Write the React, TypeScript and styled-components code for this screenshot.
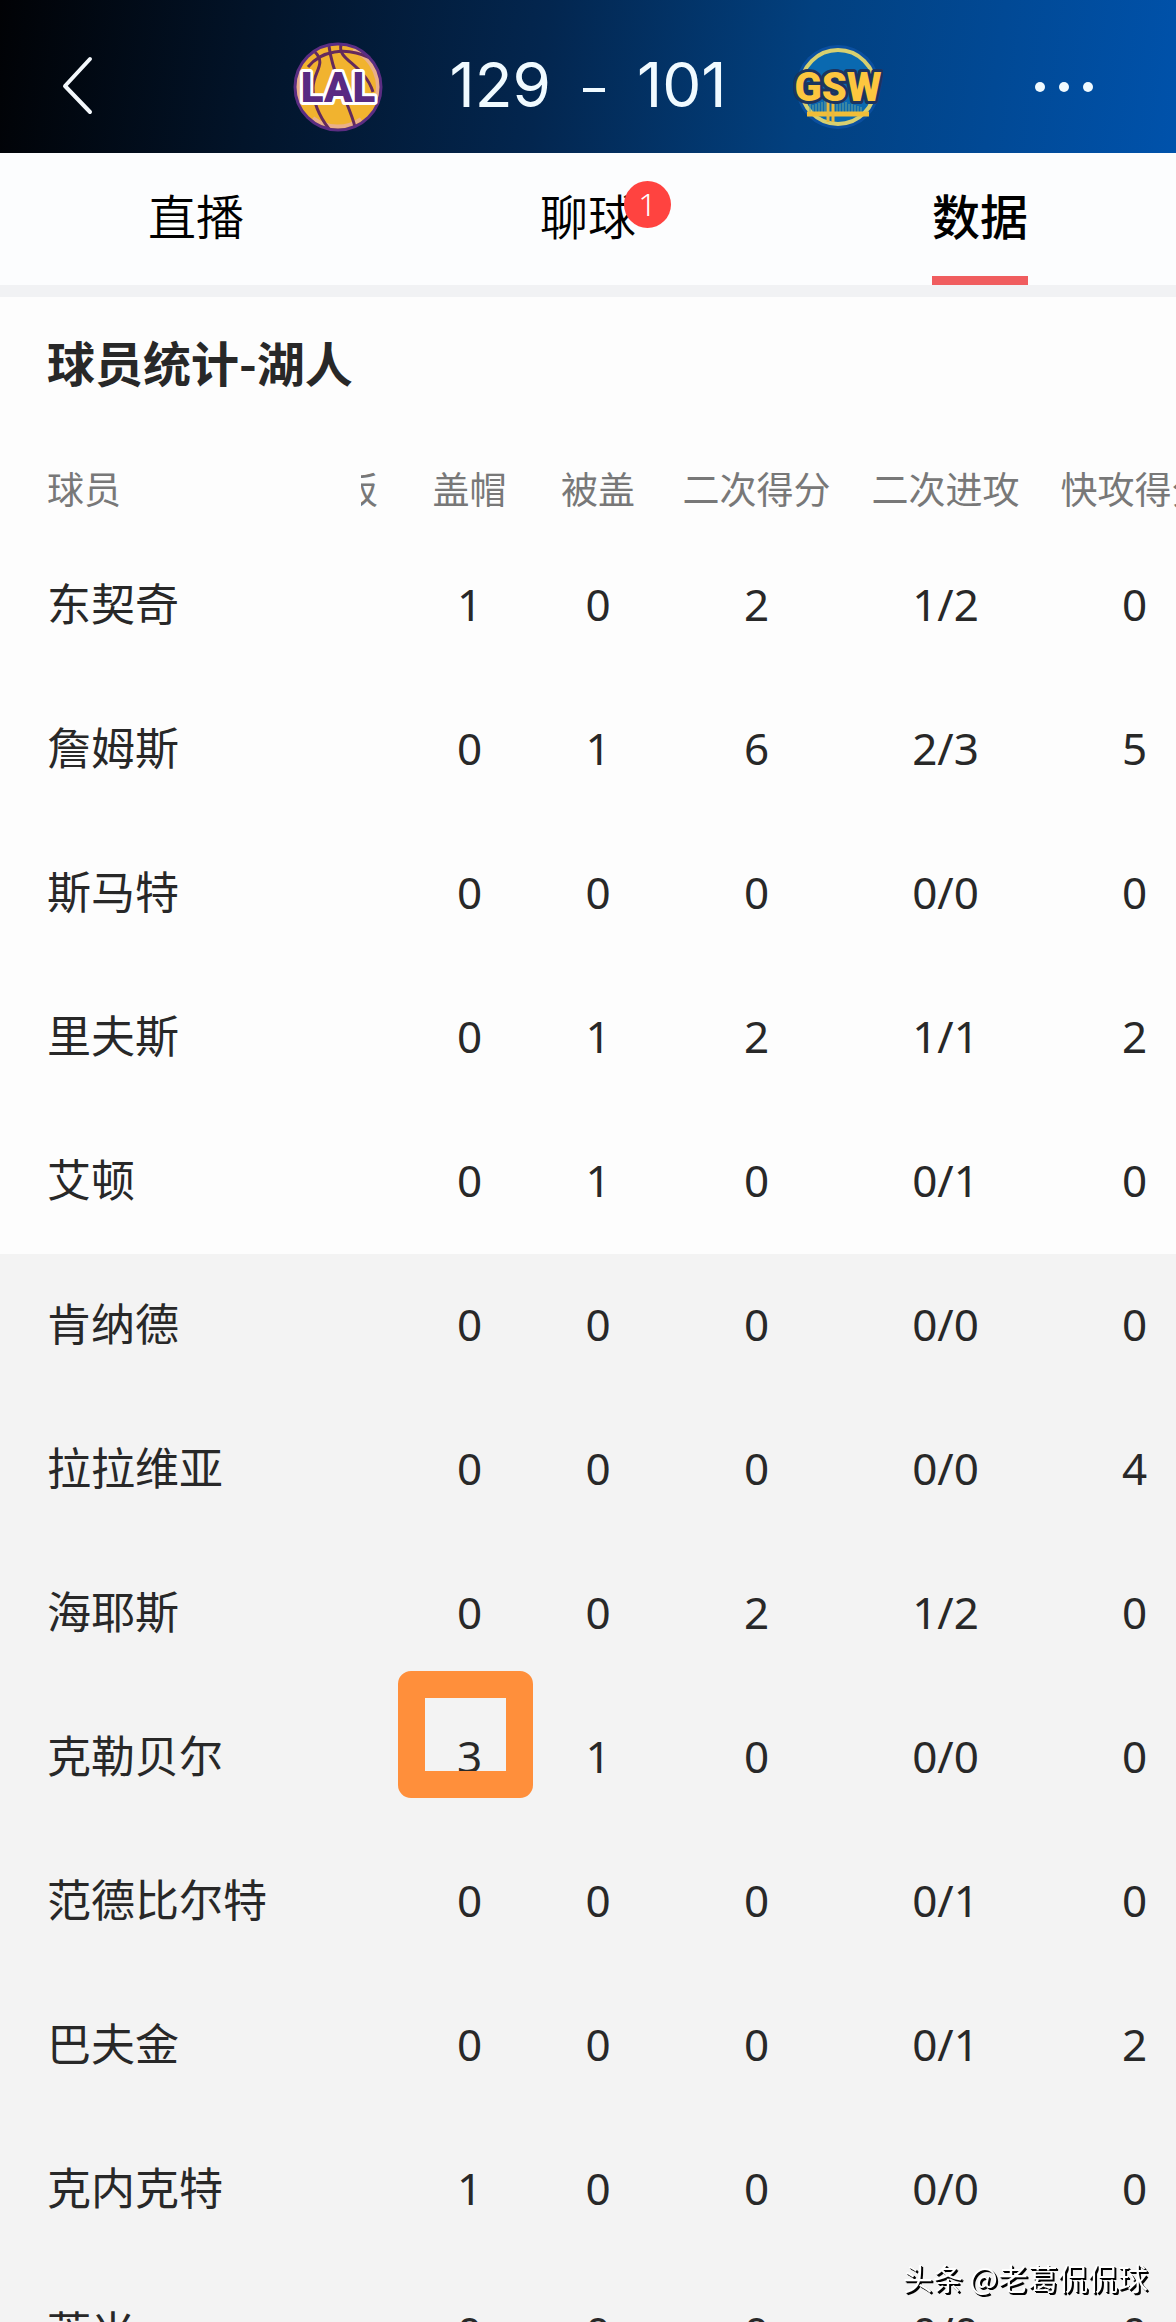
import React from 'react';
import styled, { createGlobalStyle } from 'styled-components';

const GlobalStyle = createGlobalStyle`
  *, *::before, *::after { box-sizing: border-box; }
  body {
    margin: 0;
    background: #f3f3f3;
    color: #282828;
    font-family: "Noto Sans", "Noto Sans CJK SC", sans-serif;
  }
  button { margin: 0; padding: 0; border: 0; background: none; color: inherit; font: inherit; cursor: pointer; }
`;

const Page = styled.div`
  display: flex;
  flex-direction: column;
  height: 100vh;
  overflow: hidden;
`;

const Header = styled.header`
  flex: none;
  display: grid;
  grid-template-columns: 1fr auto 1fr;
  align-items: center;
  height: 153px;
  padding: 20px 56px 0;
  background: linear-gradient(98deg, #010205 0%, #02142a 22%, #03264f 46%, #02407f 68%, #0052ab 100%);
  color: #f0faff;
`;

const IconButton = styled.button`
  display: flex;
  align-items: center;
  justify-content: center;
  width: 64px;
  height: 64px;
`;

const BackButton = styled(IconButton)`
  justify-content: flex-start;
`;

const MoreButton = styled(IconButton)`
  justify-self: end;
  margin-right: 24px;
`;

const Scoreboard = styled.div`
  display: flex;
  align-items: center;
  justify-content: space-between;
  width: 590px;
`;

const Score = styled.div`
  display: flex;
  align-items: center;
  gap: 32px;
  padding-bottom: 4px;
  font-family: Inter, "Noto Sans CJK SC", sans-serif;
  font-size: 62px;
  line-height: 72px;
`;

const ScoreDash = styled.span`
  width: 22px;
  height: 4px;
  margin-top: 10px;
  background: currentColor;
`;

const Tabs = styled.nav`
  flex: none;
  display: grid;
  grid-template-columns: repeat(3, 1fr);
  height: 144px;
  background: #fcfdfe;
  border-bottom: 12px solid #f1f2f4;
`;

const Tab = styled.button<{ $active?: boolean }>`
  display: flex;
  justify-content: center;
  height: 132px;
  color: #000;
  font-size: 48px;
  font-weight: ${(p) => (p.$active ? 500 : 350)};
  line-height: 64px;
`;

const TabLabel = styled.span<{ $active?: boolean }>`
  position: relative;
  height: 132px;
  padding-top: 29px;
  font-family: "Noto Sans CJK SC", sans-serif;
  border-bottom: 9px solid ${(p) => (p.$active ? '#f05d5f' : 'transparent')};
`;

const Badge = styled.span`
  position: absolute;
  top: 28px;
  left: 84px;
  width: 47px;
  height: 47px;
  border-radius: 50%;
  background: #ff4340;
  color: #fff;
  font-family: "Noto Sans", sans-serif;
  font-size: 32px;
  line-height: 46px;
  text-align: center;
`;

const Stats = styled.main`
  flex: 1;
  min-height: 0;
  overflow: hidden;
  background: #fdfdfd;
`;

const Title = styled.h1`
  margin: 0;
  padding: 32px 47px 0;
  font-family: "Noto Sans CJK SC", sans-serif;
  font-size: 48px;
  font-weight: 700;
  line-height: 64px;
`;

const Table = styled.table`
  width: max-content;
  table-layout: fixed;
  border-collapse: collapse;
`;

const HeadRow = styled.tr`
  height: 141px;
  color: #787878;
  font-size: 37px;
  line-height: 48px;
`;

const HeadCell = styled.th<{ $width: number; $start?: boolean }>`
  width: ${(p) => p.$width}px;
  padding: ${(p) => (p.$start ? '73px 0 0 47px' : '73px 0 0')};
  text-align: ${(p) => (p.$start ? 'left' : 'center')};
  vertical-align: top;
  font-weight: 400;
  white-space: nowrap;
`;

const ScrolledLabel = styled.span`
  display: flex;
  justify-content: flex-end;
  width: 17px;
  overflow: hidden;
`;

const Group = styled.tbody<{ $bench?: boolean }>`
  background: ${(p) => (p.$bench ? '#f3f3f3' : '#fdfdfd')};
`;

const Row = styled.tr`
  height: 144px;
  font-size: 44px;
  line-height: 60px;
`;

const Name = styled.th`
  padding: 0 0 4px 47px;
  text-align: left;
  font-weight: 400;
`;

const Cell = styled.td`
  position: relative;
  padding: 0 0 4px;
  text-align: center;
`;

const Marker = styled.span`
  position: absolute;
  top: -15px;
  left: -7px;
  width: 135px;
  height: 127px;
  border: 27px solid #ff8f3b;
  border-radius: 13px;
`;

const Watermark = styled.div`
  position: fixed;
  right: 28px;
  bottom: 25px;
  color: #fff;
  font-family: "Noto Sans CJK SC", sans-serif;
  font-size: 30px;
  line-height: 40px;
  text-shadow: 1px 1px 0 #000, 2px 2px 0 #000;
`;

type Player = { name: string; values: string[]; marked?: boolean };

const starters: Player[] = [
  { name: '东契奇', values: ['1', '0', '2', '1/2', '0'] },
  { name: '詹姆斯', values: ['0', '1', '6', '2/3', '5'] },
  { name: '斯马特', values: ['0', '0', '0', '0/0', '0'] },
  { name: '里夫斯', values: ['0', '1', '2', '1/1', '2'] },
  { name: '艾顿', values: ['0', '1', '0', '0/1', '0'] },
];

const bench: Player[] = [
  { name: '肯纳德', values: ['0', '0', '0', '0/0', '0'] },
  { name: '拉拉维亚', values: ['0', '0', '0', '0/0', '4'] },
  { name: '海耶斯', values: ['0', '0', '2', '1/2', '0'] },
  { name: '克勒贝尔', values: ['3', '1', '0', '0/0', '0'], marked: true },
  { name: '范德比尔特', values: ['0', '0', '0', '0/1', '0'] },
  { name: '巴夫金', values: ['0', '0', '0', '0/1', '2'] },
  { name: '克内克特', values: ['1', '0', '0', '0/0', '0'] },
  { name: '蒂米', values: ['0', '0', '0', '0/0', '0'] },
];

function LakersLogo() {
  return (
    <svg width="90" height="90" viewBox="0 0 90 90" role="img" aria-label="LAL">
      <circle cx="45" cy="45" r="43" fill="#f1b32f" />
      <g fill="none" stroke="#eab08a" strokeWidth="4">
        <path d="M8 61A40 40 0 0 1 8 30M60 8A40 40 0 0 1 82 60M20 76A40 40 0 0 0 68 77" />
      </g>
      <g fill="none" stroke="#642a5c" strokeWidth="3">
        <path d="M15 25C28 9 52 4 77 16" />
        <path d="M22 10C34 22 20 30 20 46C20 62 27 75 36 87" />
        <path d="M36 4C38 22 45 38 50 52C56 67 60 76 62 85" />
        <path d="M48 3C44 18 71 22 80 50" />
      </g>
      <circle cx="45" cy="45" r="43" fill="none" stroke="#5b2d82" strokeWidth="3" />
      <text
        x="45"
        y="60"
        textAnchor="middle"
        fontFamily="Roboto, sans-serif"
        fontWeight="900"
        fontSize="42"
        fill="#592a82"
        stroke="#fff"
        strokeWidth="6"
        strokeLinejoin="round"
        paintOrder="stroke"
      >
        LAL
      </text>
    </svg>
  );
}

function WarriorsLogo() {
  return (
    <svg width="90" height="90" viewBox="0 0 90 90" role="img" aria-label="GSW">
      <circle cx="45" cy="45" r="42" fill="#0b4f9f" />
      <circle cx="45" cy="45" r="37" fill="#0a69b0" stroke="#d7d070" strokeWidth="4" />
      <g stroke="#6fa595" strokeWidth="1">
        <path d="M17 61V70M20 63V70M23 62V70M26 61V70M29 60V70M32 58V70M44 59V70M47 59V70M50 61V70M53 60V70M56 62V70M59 62V70M62 63V70M65 64V70M68 65V70" />
      </g>
      <path d="M14 72H76" stroke="#f0bd38" strokeWidth="5" />
      <path d="M35 57V80M40 57V80" stroke="#e9b93c" strokeWidth="3" />
      <text
        x="45"
        y="59"
        textAnchor="middle"
        fontFamily="Roboto, sans-serif"
        fontWeight="900"
        fontSize="40"
        fill="#fdc63f"
        stroke="#1c3460"
        strokeWidth="6"
        strokeLinejoin="round"
        paintOrder="stroke"
      >
        GSW
      </text>
    </svg>
  );
}

function PlayerRows({ players }: { players: Player[] }) {
  return (
    <>
      {players.map((player) => (
        <Row key={player.name}>
          <Name scope="row">{player.name}</Name>
          <Cell />
          {player.values.map((value, i) => (
            <Cell key={i}>
              {value}
              {player.marked && i === 0 && <Marker />}
            </Cell>
          ))}
        </Row>
      ))}
    </>
  );
}

export default function App() {
  return (
    <Page>
      <GlobalStyle />
      <Header>
        <BackButton aria-label="返回">
          <svg width="44" height="64" viewBox="0 0 44 64" fill="none" stroke="#f4f8fc" strokeWidth="4" strokeLinecap="round" strokeLinejoin="round">
            <path d="M34 4L9 31L34 57" />
          </svg>
        </BackButton>
        <Scoreboard>
          <LakersLogo />
          <Score>
            <span>129</span>
            <ScoreDash />
            <span>101</span>
          </Score>
          <WarriorsLogo />
        </Scoreboard>
        <MoreButton aria-label="更多">
          <svg width="64" height="16" viewBox="0 0 64 16" fill="#f0faff">
            <circle cx="8" cy="8" r="5" />
            <circle cx="32" cy="8" r="5" />
            <circle cx="56" cy="8" r="5" />
          </svg>
        </MoreButton>
      </Header>
      <Tabs>
        <Tab>
          <TabLabel>直播</TabLabel>
        </Tab>
        <Tab>
          <TabLabel>
            聊球
            <Badge>1</Badge>
          </TabLabel>
        </Tab>
        <Tab $active aria-current="page">
          <TabLabel $active>数据</TabLabel>
        </Tab>
      </Tabs>
      <Stats>
        <Title>球员统计-湖人</Title>
        <Table>
          <thead>
            <HeadRow>
              <HeadCell $width={361} $start scope="col">球员</HeadCell>
              <HeadCell $width={44} scope="col">
                <ScrolledLabel>板</ScrolledLabel>
              </HeadCell>
              <HeadCell $width={129} scope="col">盖帽</HeadCell>
              <HeadCell $width={128} scope="col">被盖</HeadCell>
              <HeadCell $width={189} scope="col">二次得分</HeadCell>
              <HeadCell $width={189} scope="col">二次进攻</HeadCell>
              <HeadCell $width={189} scope="col">快攻得分</HeadCell>
            </HeadRow>
          </thead>
          <Group>
            <PlayerRows players={starters} />
          </Group>
          <Group $bench>
            <PlayerRows players={bench} />
          </Group>
        </Table>
      </Stats>
      <Watermark>头条 @老葛侃侃球</Watermark>
    </Page>
  );
}
